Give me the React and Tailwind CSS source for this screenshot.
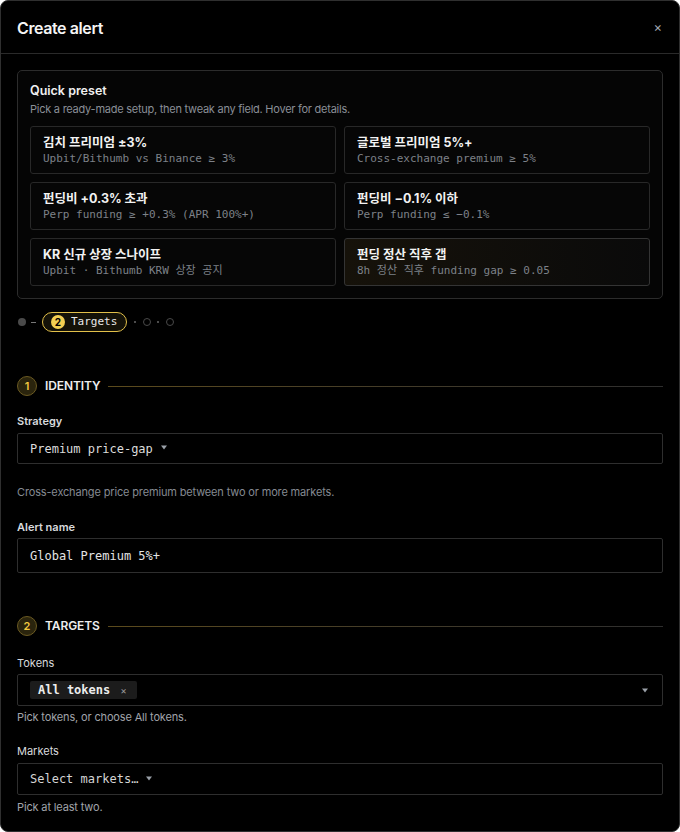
import { useState } from "react";

const presets = [
  { title: "김치 프리미엄 ±3%", sub: "Upbit/Bithumb vs Binance ≥ 3%" },
  { title: "글로벌 프리미엄 5%+", sub: "Cross-exchange premium ≥ 5%" },
  { title: "펀딩비 +0.3% 초과", sub: "Perp funding ≥ +0.3% (APR 100%+)" },
  { title: "펀딩비 −0.1% 이하", sub: "Perp funding ≤ −0.1%" },
  { title: "KR 신규 상장 스나이프", sub: "Upbit · Bithumb KRW 상장 공지" },
  { title: "펀딩 정산 직후 갭", sub: "8h 정산 직후 funding gap ≥ 0.05", hot: true },
];

const sans = "font-['Inter','Noto_Sans_CJK_KR',sans-serif]";
const mono = "font-['DejaVu_Sans_Mono','Noto_Sans_CJK_KR',monospace]";

function SectionHead({ n, label }) {
  return (
    <div className="flex items-center gap-[8px]">
      <div className="w-[20px] h-[20px] rounded-full border border-[#6b5a22] bg-[#2a240d] flex items-center justify-center text-[11px] font-semibold text-[#f3c93f]">
        {n}
      </div>
      <div className="text-[12px] font-semibold text-[#ededed] tracking-[-0.1px]">{label}</div>
      <div className="flex-1 h-px bg-gradient-to-r from-[#5c4b1c] to-[#2e2e2e]" />
    </div>
  );
}

function Caret({ className = "" }) {
  return (
    <svg width="6" height="5" viewBox="0 0 6 5" className={className}>
      <path d="M0 0.5 L6 0.5 L3 4.5 Z" fill="#9aa0a8" />
    </svg>
  );
}

export default function App() {
  const [strategy] = useState("Premium price-gap");

  return (
    <div className={`w-[680px] h-[832px] bg-black text-white ${sans} border border-[#2f2f2f] rounded-[8px] overflow-hidden flex flex-col`}>
      {/* header */}
      <div className="h-[53px] shrink-0 flex items-center justify-between px-[16px] pt-[1px] border-b border-[#2a2a2a]">
        <div className="text-[16px] font-semibold tracking-[-0.4px] text-[#f5f5f5]">Create alert</div>
        <div className="text-[13px] text-[#a0a6ae] mr-[1px]">×</div>
      </div>

      <div className="px-[16px] pt-[16px] flex flex-col">
        {/* quick preset */}
        <div className="border border-[#2c2c2c] rounded-[5px] bg-[#050505] px-[12px] pt-[12px] pb-[12px]">
          <div className="text-[12.5px] font-semibold text-[#f0f0f0] leading-[16px]">Quick preset</div>
          <div className="text-[11px] text-[#8a8f97] leading-[14px] mt-[3px] tracking-[-0.25px]">
            Pick a ready-made setup, then tweak any field. Hover for details.
          </div>
          <div className="grid grid-cols-2 gap-[8px] mt-[10px]">
            {presets.map((p) => (
              <div
                key={p.title}
                className={`h-[48px] rounded-[3px] border px-[12px] pt-[7px] ${
                  p.hot
                    ? "border-[#343434] bg-gradient-to-r from-[#16120a] to-[#0a0a0a]"
                    : "border-[#282828] bg-[#060606]"
                }`}
              >
                <div className="text-[12.5px] font-bold text-[#f2f2f2] leading-[17px]">{p.title}</div>
                <div className={`${mono} text-[11px] text-[#7d8188] leading-[15px]`}>{p.sub}</div>
              </div>
            ))}
          </div>
        </div>

        {/* stepper */}
        <div className="flex items-center mt-[12px] h-[22px]">
          <div className="w-[8px] h-[8px] rounded-full bg-[#4a4a4a] ml-[1px]" />
          <div className="w-[5px] h-px bg-[#777] ml-[5px]" />
          <div className="ml-[6px] h-[20px] flex items-center border border-[#e2c04a] rounded-full bg-[#141208] pl-[8px] pr-[9px]">
            <div className="w-[14px] h-[14px] rounded-full bg-[#f3cf52] text-black text-[10px] font-bold flex items-center justify-center">2</div>
            <div className={`${mono} text-[11px] text-[#e8e8e8] ml-[6px]`}>Targets</div>
          </div>
          <div className="w-[2px] h-[2px] rounded-full bg-[#666] ml-[7px]" />
          <div className="w-[8px] h-[8px] rounded-full border border-[#4a4a4a] ml-[7px]" />
          <div className="w-[2px] h-[2px] rounded-full bg-[#666] ml-[6px]" />
          <div className="w-[8px] h-[8px] rounded-full border border-[#4a4a4a] ml-[7px]" />
        </div>

        {/* identity */}
        <div className="mt-[43px]">
          <SectionHead n="1" label="IDENTITY" />
        </div>

        <div className="text-[11px] font-semibold text-[#d8dadd] mt-[18px] leading-[14px]">Strategy</div>
        <div className="mt-[5px] h-[31px] border border-[#2e2e2e] rounded-[2px] flex items-center px-[12px]">
          <span className={`${mono} text-[12px] text-[#dcdcdc]`}>{strategy}</span>
          <Caret className="ml-[8px] mb-[2px]" />
        </div>
        <div className="text-[11px] text-[#858a92] mt-[21px] leading-[14px] tracking-[-0.15px]">
          Cross-exchange price premium between two or more markets.
        </div>

        <div className="text-[11px] font-semibold text-[#d8dadd] mt-[21px] leading-[14px]">Alert name</div>
        <div className="mt-[4px] h-[35px] border border-[#2e2e2e] rounded-[2px] flex items-center px-[12px]">
          <span className={`${mono} text-[12px] text-[#e4e4e4]`}>Global Premium 5%+</span>
        </div>

        {/* targets */}
        <div className="mt-[43px]">
          <SectionHead n="2" label="TARGETS" />
        </div>

        <div className="text-[11px] text-[#d8dadd] mt-[20px] leading-[14px]">Tokens</div>
        <div className="mt-[4px] h-[32px] border border-[#2e2e2e] rounded-[2px] flex items-center pl-[12px] pr-[14px]">
          <div className="h-[18px] rounded-[2px] bg-[#1c1c1c] flex items-center pl-[8px] pr-[10px]">
            <span className={`${mono} text-[12px] font-bold text-[#ececec]`}>All tokens</span>
            <span className="text-[10px] text-[#9a9a9a] ml-[10px]">×</span>
          </div>
          <div className="flex-1" />
          <Caret />
        </div>
        <div className="text-[11px] text-[#a0a4aa] mt-[4px] leading-[14px] tracking-[-0.15px]">Pick tokens, or choose All tokens.</div>

        <div className="text-[11px] text-[#d8dadd] mt-[20px] leading-[14px]">Markets</div>
        <div className="mt-[5px] h-[32px] border border-[#2e2e2e] rounded-[2px] flex items-center px-[12px]">
          <span className={`${mono} text-[12px] text-[#d4d4d4]`}>Select markets…</span>
          <Caret className="ml-[8px] mb-[2px]" />
        </div>
        <div className="text-[11px] text-[#a0a4aa] mt-[5px] leading-[14px] tracking-[-0.15px]">Pick at least two.</div>
      </div>
    </div>
  );
}
